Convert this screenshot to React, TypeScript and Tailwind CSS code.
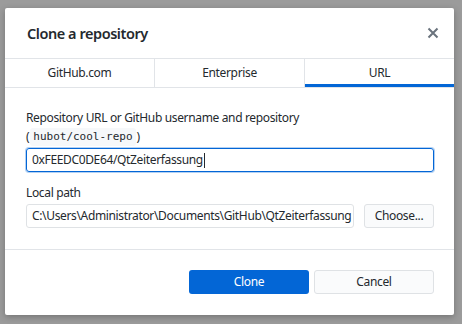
import React from "react";

const font = { fontFamily: '"Noto Sans", "Open Sans", sans-serif' };

function CloseIcon() {
  return (
    <svg width="12" height="12" viewBox="0 0 12 12" className="text-[#6a737d]">
      <path d="M1.5 1.5 L10.5 10.5 M10.5 1.5 L1.5 10.5" stroke="currentColor" strokeWidth="2" />
    </svg>
  );
}

const tabs = ["GitHub.com", "Enterprise", "URL"];

export default function App() {
  return (
    <div
      className="h-[324px] w-[462px] overflow-hidden bg-[#9b9b9b] pl-[5px] pt-[8px] text-[#24292e] tracking-[-0.35px]"
      style={font}
    >
      <div className="flex h-[307px] w-[449px] flex-col rounded-[2px] bg-white shadow-[0_2px_6px_rgba(0,0,0,0.25)]">
        <header className="flex h-[50px] items-center justify-between pl-[22px] pr-[15px]">
          <h1 className="text-[14.5px] font-semibold leading-none tracking-[-0.45px]">Clone a repository</h1>
          <CloseIcon />
        </header>

        <nav className="flex h-[30px] border-y border-[#e1e4e8]">
          {tabs.map((t, i) => (
            <div
              key={t}
              className={
                "relative flex flex-1 items-center justify-center text-[12px] " +
                (i > 0 ? "border-l border-[#e1e4e8]" : "")
              }
            >
              {t}
              {t === "URL" && <div className="absolute inset-x-0 bottom-0 h-[3px] bg-[#0366d6]" />}
            </div>
          ))}
        </nav>

        <main className="flex flex-1 flex-col pl-[21px] pr-[20px] pt-[22px] text-[12px]">
          <label className="leading-[16px]">Repository URL or GitHub username and repository</label>
          <div className="mt-[2px] flex items-center leading-[18px]">
            (
            <code
              className="mx-[1px] rounded-[3px] bg-[#f6f8fa] px-[3px] text-[11px] tracking-[0px]"
              style={{ fontFamily: '"DejaVu Sans Mono", monospace' }}
            >
              hubot/cool-repo
            </code>
            )
          </div>
          <div className="mt-[2px] flex h-[24px] items-center rounded-[3px] border border-[#0366d6] pl-[5px] shadow-[0_0_0_1px_rgba(3,102,214,0.3)]">
            <span>0xFEEDC0DE64/QtZeiterfassung</span>
            <span className="ml-[1px] h-[15px] w-px bg-[#24292e]" />
          </div>

          <label className="mt-[13px] leading-[16px]">Local path</label>
          <div className="mt-[3px] flex gap-[10px]">
            <div className="flex h-[24px] w-[328px] items-center overflow-hidden whitespace-nowrap rounded-[3px] border border-[#dfe2e5] pl-[5px]">
              C:\Users\Administrator\Documents\GitHub\QtZeiterfassung
            </div>
            <button className="flex h-[24px] w-[70px] items-center justify-center rounded-[3px] border border-[#dfe2e5] bg-[#fafbfc]">
              Choose...
            </button>
          </div>
        </main>

        <footer className="flex h-[66px] items-center justify-end gap-[5px] border-t border-[#e1e4e8] pb-[1px] pr-[20px] text-[12px]">
          <button className="h-[24px] w-[120px] rounded-[3px] bg-[#0366d6] text-white">Clone</button>
          <button className="h-[24px] w-[120px] rounded-[3px] border border-[#dfe2e5] bg-[#fafbfc]">Cancel</button>
        </footer>
      </div>
    </div>
  );
}
